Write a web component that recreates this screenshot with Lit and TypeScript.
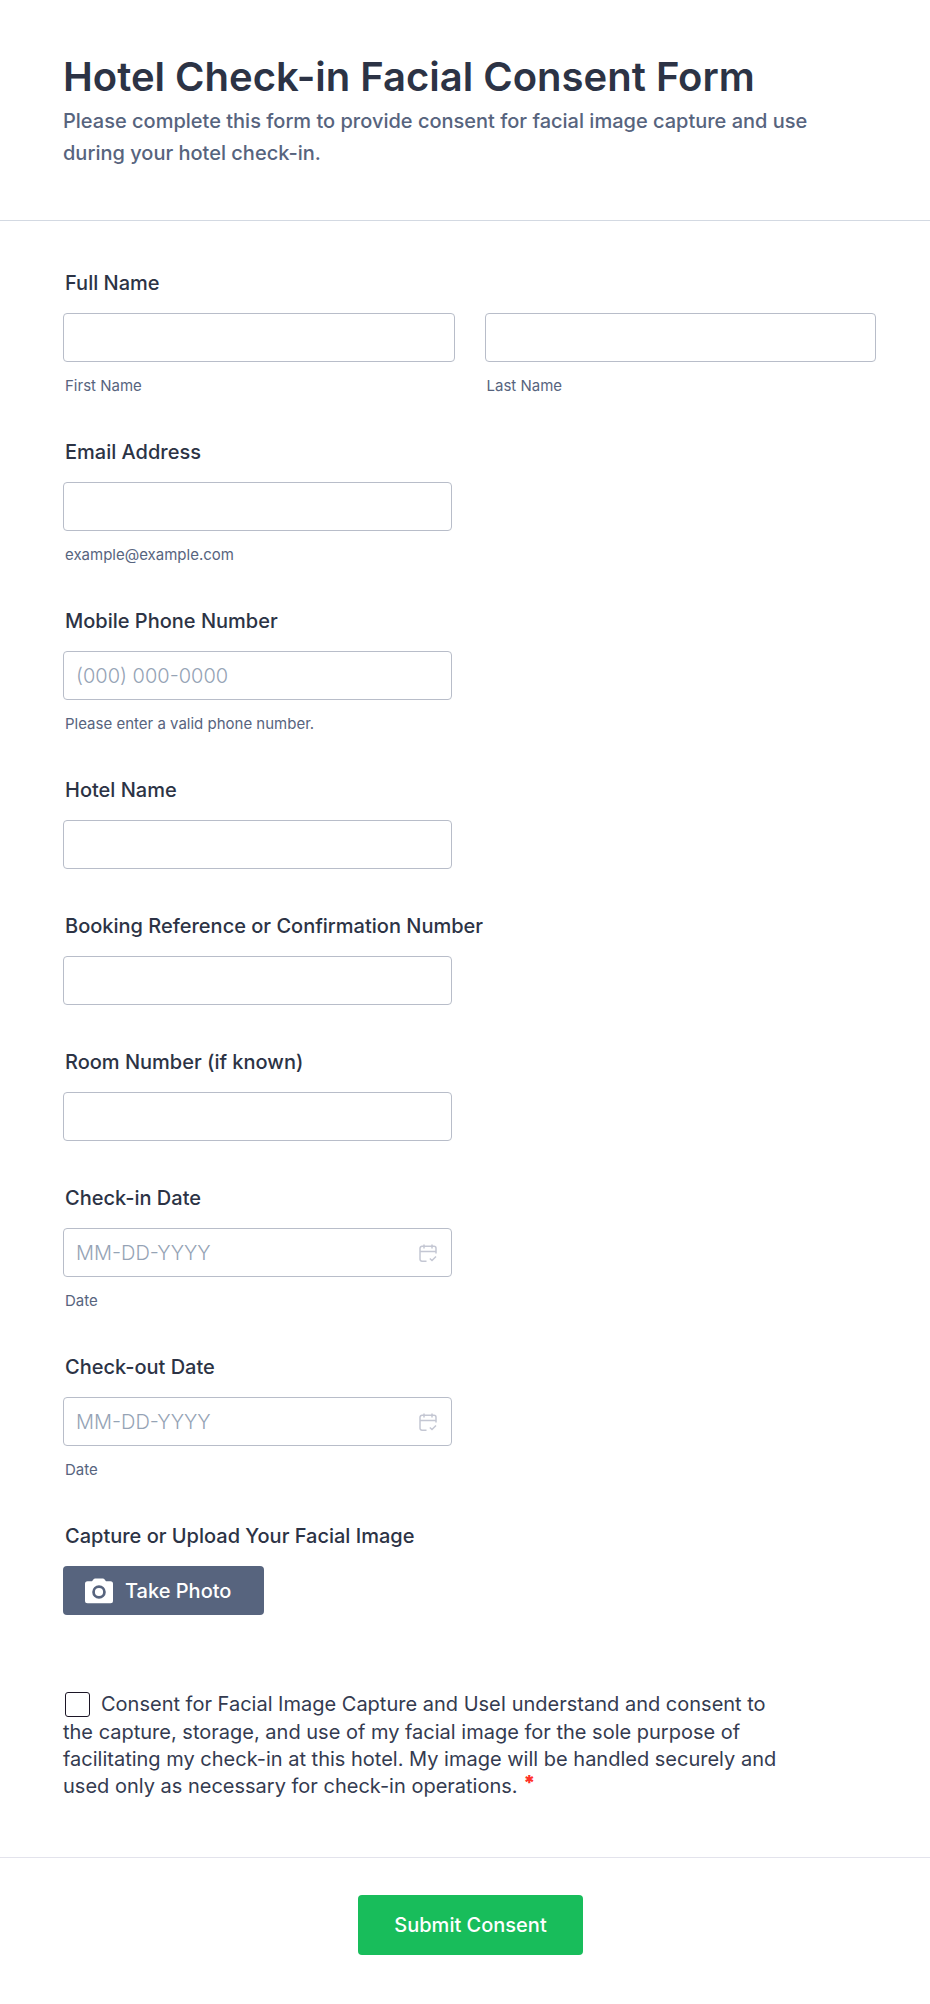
import { LitElement, html, css, nothing } from "lit";
import { customElement } from "lit/decorators.js";

interface Field {
  id: string;
  label: string;
  hint?: string;
  type?: string;
  placeholder?: string;
  calendar?: boolean;
}

const FIELDS: Field[] = [
  { id: "email", label: "Email Address", hint: "example@example.com", type: "email" },
  { id: "phone", label: "Mobile Phone Number", hint: "Please enter a valid phone number.", type: "tel", placeholder: "(000) 000-0000" },
  { id: "hotel", label: "Hotel Name" },
  { id: "booking", label: "Booking Reference or Confirmation Number" },
  { id: "room", label: "Room Number (if known)" },
  { id: "checkin", label: "Check-in Date", hint: "Date", placeholder: "MM-DD-YYYY", calendar: true },
  { id: "checkout", label: "Check-out Date", hint: "Date", placeholder: "MM-DD-YYYY", calendar: true },
];

const calendarIcon = html`<svg class="calendar" viewBox="0 0 18 18" aria-hidden="true">
  <path d="M7.500 17.200H3A2 2 0 0 1 1 15.200V4.300A2 2 0 0 1 3 2.300H15A2 2 0 0 1 17 4.300V9.500M1 7.500H17M5 .5V4.500M13 .5V4.500M10.800 14.500L13 16.500L17 12.500" />
</svg>`;

const cameraIcon = html`<svg class="camera" viewBox="0 0 28 26" aria-hidden="true">
  <path fill="#fff" fill-rule="evenodd" d="M10 .5h8a1.500 1.500 0 0 1 1.200.6L21 3.300h4.500A2.500 2.500 0 0 1 28 5.800v17a2.500 2.500 0 0 1-2.500 2.500h-23A2.500 2.500 0 0 1 0 22.800v-17a2.500 2.500 0 0 1 2.500-2.500H7L8.800 1.100A1.500 1.500 0 0 1 10 .5zM14 7.200a6.800 6.800 0 1 0 0 13.600a6.800 6.800 0 0 0 0-13.600zm0 2.700a4.100 4.100 0 1 1 0 8.200a4.100 4.100 0 0 1 0-8.200z" />
</svg>`;

@customElement("app-root")
export class AppRoot extends LitElement {
  static styles = css`
    :host { display: block; font-family: Inter, sans-serif; font-size: 20px; color: #2c3345; background: #fff; }
    * { box-sizing: border-box; }
    header { padding: 52px 62px 51px 63px; border-bottom: 1px solid #d3d9e2; }
    h1 { margin: 0; font-size: 40px; line-height: 50px; font-weight: 600; }
    header p { margin: 3px 0 0; max-width: 760px; line-height: 32px; font-weight: 500; color: #57647e; }
    .fields { padding: 49px 54px 0 63px; }
    .field { margin-bottom: 44px; }
    .label { display: block; margin-bottom: 17px; padding: 0 2px; line-height: 26px; font-weight: 500; }
    .pair { display: grid; grid-template-columns: 1fr 1fr; gap: 30px; }
    .control { display: flex; align-items: center; width: 389px; max-width: 100%; height: 49px; border: 1px solid #b8bdc9; border-radius: 4px; background: #fff; }
    .pair .control { width: 100%; }
    .control input { flex: 1; min-width: 0; height: 100%; border: 0; padding: 0 12px; background: none; color: inherit; font: inherit; outline: none; }
    .control:focus-within { border-color: #2e69ff; }
    .control input::placeholder { color: #95a3b5; opacity: 1; font-weight: 300; }
    .hint { display: block; margin-top: 14px; padding: 0 2px; font-size: 15px; line-height: 19px; color: #57647e; }
    .calendar { width: 18px; height: 18px; margin-right: 14px; fill: none; stroke: #c4c7d3; stroke-width: 1.5; }
    button { font: inherit; font-weight: 500; color: #fff; border: 0; border-radius: 4px; cursor: pointer; }
    .photo { display: flex; align-items: center; gap: 12px; height: 49px; padding: 0 33px 0 22px; background: #57647e; }
    .camera { width: 28px; height: 26px; }
    .consent { max-width: 730px; margin-top: 76px; line-height: 27px; color: #343b50; }
    .consent input { appearance: none; width: 25px; height: 25px; margin: 0 11px 2px 2px; border: 1px solid #1c1626; border-radius: 3px; vertical-align: middle; }
    .consent input:checked { background: #2e69ff; }
    .required { color: #ff3229; font-weight: 900; line-height: 20px; vertical-align: 3px; }
    footer { display: flex; justify-content: center; padding: 37px 0 49px 11px; border-top: 1px solid #e3e3ec; margin-top: 57px; }
    .submit { height: 60px; padding: 0 36px; background: #18bd5b; }
  `;

  private field(f: Field) {
    return html`<div class="field">
      <label class="label" for=${f.id}>${f.label}</label>
      <div class="control">
        <input id=${f.id} type=${f.type ?? "text"} placeholder=${f.placeholder ?? nothing} />
        ${f.calendar ? calendarIcon : nothing}
      </div>
      ${f.hint ? html`<label class="hint" for=${f.id}>${f.hint}</label>` : nothing}
    </div>`;
  }

  render() {
    return html`<form @submit=${(e: Event) => e.preventDefault()}>
      <header>
        <h1>Hotel Check-in Facial Consent Form</h1>
        <p>Please complete this form to provide consent for facial image capture and use during your hotel check-in.</p>
      </header>
      <div class="fields">
        <div class="field" role="group" aria-labelledby="name-label">
          <span class="label" id="name-label">Full Name</span>
          <div class="pair">
            <div><div class="control"><input id="first" type="text" /></div><label class="hint" for="first">First Name</label></div>
            <div><div class="control"><input id="last" type="text" /></div><label class="hint" for="last">Last Name</label></div>
          </div>
        </div>
        ${FIELDS.map((f) => this.field(f))}
        <div class="field">
          <label class="label" for="photo">Capture or Upload Your Facial Image</label>
          <button class="photo" id="photo" type="button">${cameraIcon}Take Photo</button>
        </div>
        <div class="consent">
          <input id="consent" type="checkbox" required /><label for="consent">Consent for Facial Image Capture and UseI understand and consent to the capture, storage, and use of my facial image for the sole purpose of facilitating my check-in at this hotel. My image will be handled securely and used only as necessary for check-in operations.</label>
          <span class="required">*</span>
        </div>
      </div>
      <footer><button class="submit" type="submit">Submit Consent</button></footer>
    </form>`;
  }
}
